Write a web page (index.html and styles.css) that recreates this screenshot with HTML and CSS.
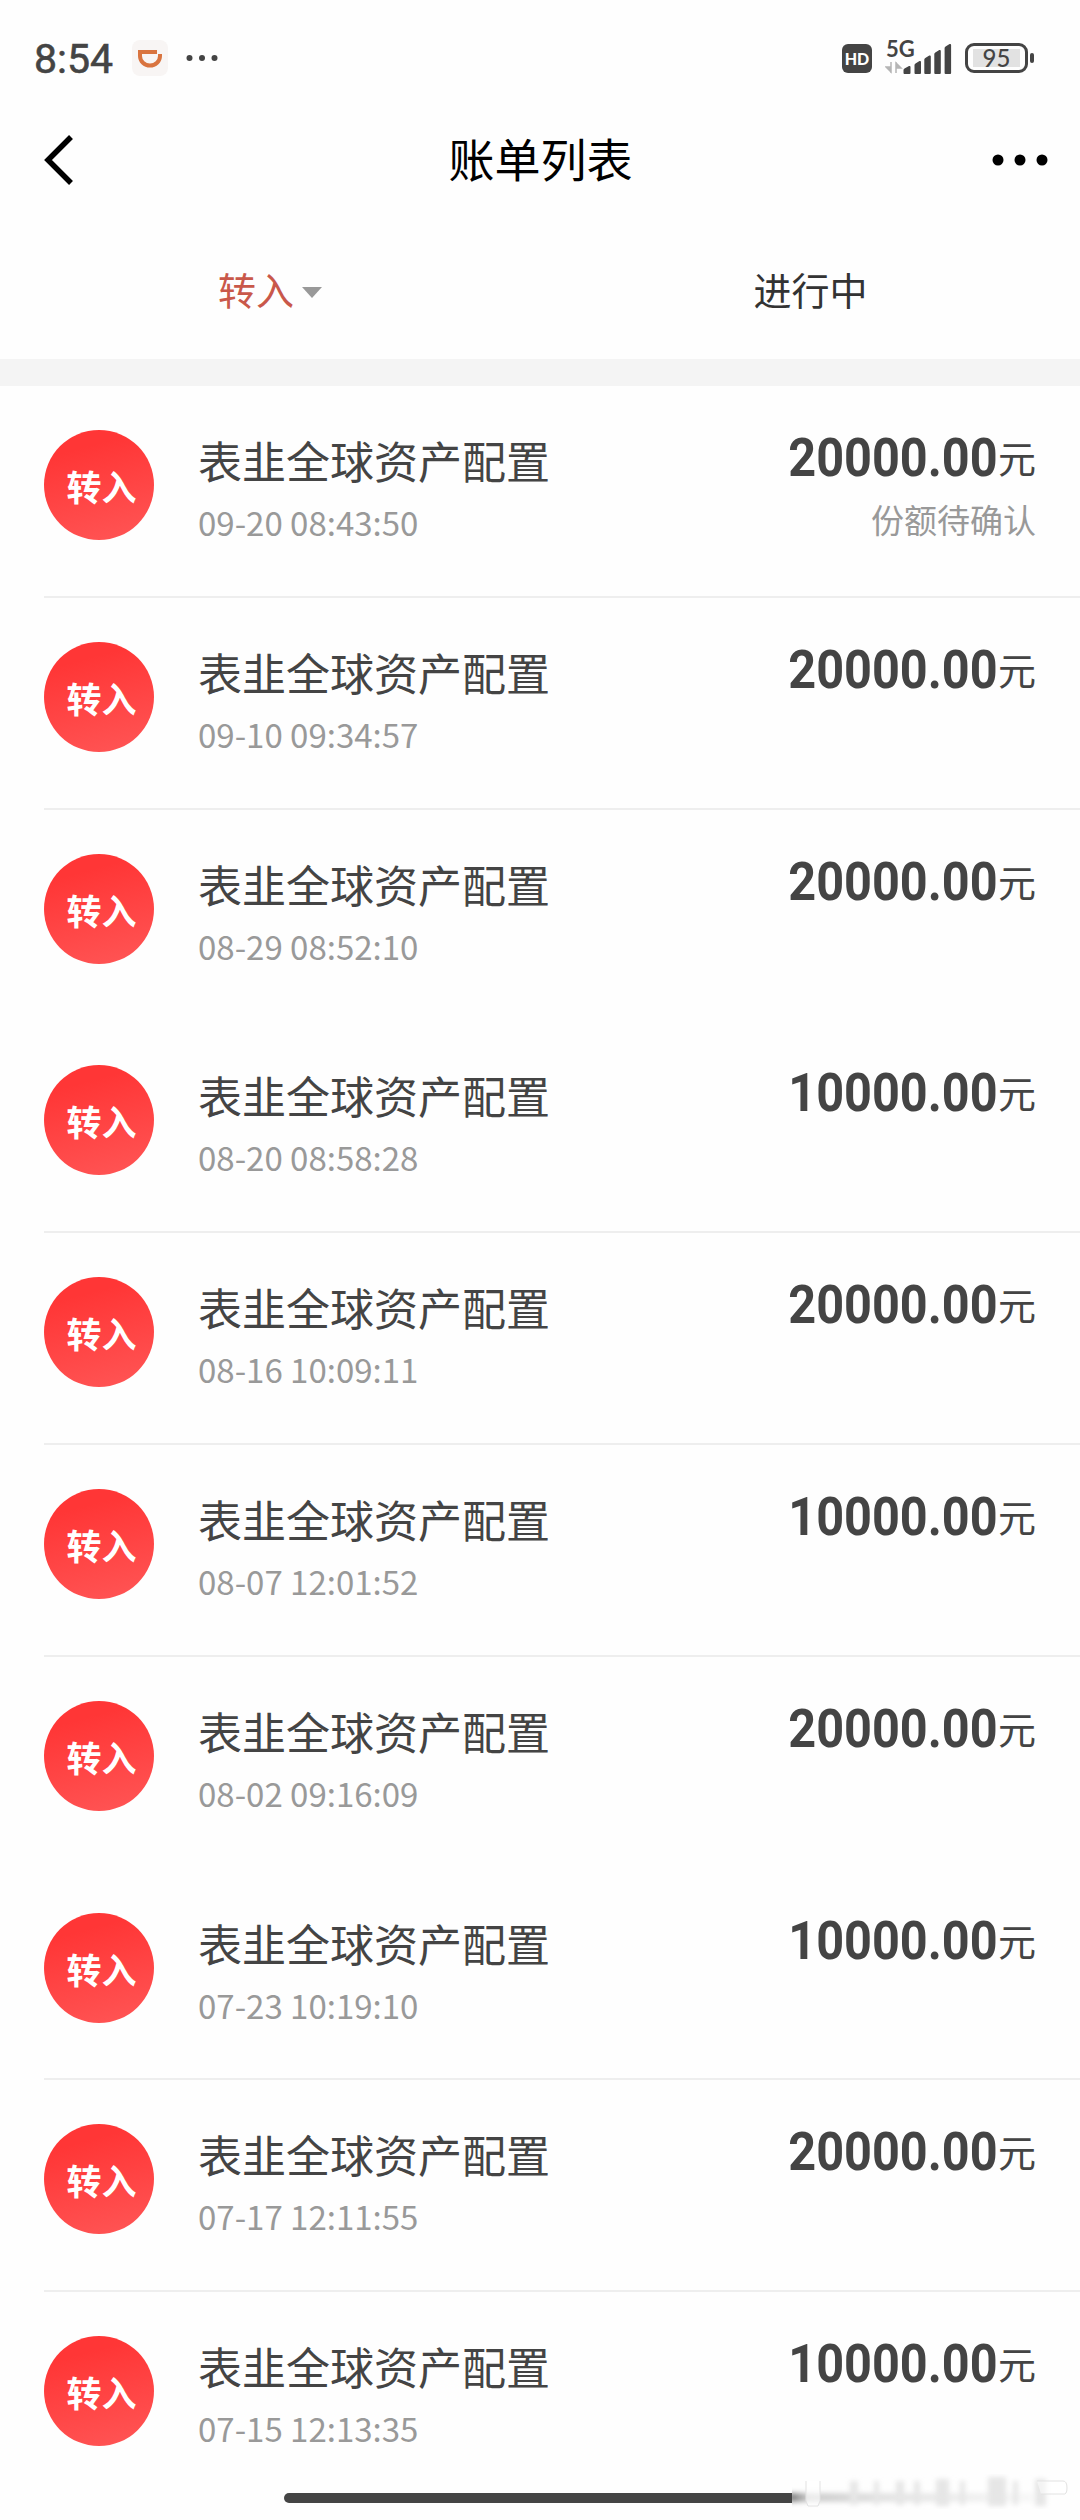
FILE: index.html
```
<!DOCTYPE html>
<html lang="zh-CN">
<head>
    <meta charset="UTF-8">
    <meta name="viewport" content="width=device-width, initial-scale=1.0">
    <title>账单列表</title>
    <link rel="stylesheet" href="styles.css">
</head>
<body>
    <div class="status">
        <span class="clock">8:54</span>
        <svg class="didi" width="36" height="36" viewBox="0 0 36 36">
            <rect width="36" height="36" rx="8" fill="#f8f5f4"/>
            <path d="M25 12H8v4a10 9.500 0 0 0 20 0v-2" fill="none" stroke="#d9743f" stroke-width="4"/>
        </svg>
        <svg class="more" width="32" height="8" viewBox="0 0 32 8" fill="#444">
            <circle cx="3.500" cy="4" r="3"/>
            <circle cx="16" cy="4" r="3"/>
            <circle cx="28.500" cy="4" r="3"/>
        </svg>
        <div class="right">
            <span class="hd">HD</span>
            <div class="signal">
                <span class="net">5G</span>
                <svg width="68" height="34" viewBox="0 0 68 34">
                    <path d="M6 22v11M6 32l-5-5h5zM11 33V22M11 23l5 5h-5z" fill="#b5b5b5" stroke="#b5b5b5" stroke-width="1.500"/>
                    <path d="M18.500 33v-3q0-1 1-1.600l4.500-2.400q1.500-.500 1.500 1v6q0 1-1 1h-5q-1 0-1-1zM29.500 33v-8q0-1 1-1.600l4-2.400q1.500-.500 1.500 1v11q0 1-1 1h-4.500q-1 0-1-1zM39.300 33V19.500q0-1 1-1.600l4-2.400q1.500-.500 1.500 1V33q0 1-1 1h-4.500q-1 0-1-1zM49.300 33V14q0-1 1-1.600l4-2.400q1.500-.500 1.500 1v22q0 1-1 1h-4.500q-1 0-1-1zM59.600 33V8q0-1 1-1.600l4-2.400q1.500-.500 1.500 1v28q0 1-1 1h-4.500q-1 0-1-1z" fill="#444"/>
                </svg>
            </div>
            <div class="battery"><span>95</span></div>
            <i class="nub"></i>
        </div>
    </div>
    <div class="nav">
        <svg class="back" width="34" height="52" viewBox="0 0 34 52">
            <path d="M30 3L7 26l23 23" fill="none" stroke="#000" stroke-width="5.500"/>
        </svg>
        <h1>账单列表</h1>
        <svg class="menu" width="56" height="12" viewBox="0 0 56 12">
            <circle cx="6" cy="6" r="5.500"/>
            <circle cx="28" cy="6" r="5.500"/>
            <circle cx="50" cy="6" r="5.500"/>
        </svg>
    </div>
    <div class="tabs">
        <div class="tab active">转入<i class="arrow"></i></div>
        <div class="tab">进行中</div>
    </div>
    <ul class="list"></ul>
    <div class="home">
        <svg class="smear" width="290" height="36" viewBox="0 0 290 36">
            <defs>
                <linearGradient id="tail">
                    <stop offset="0" stop-color="#777"/>
                    <stop offset=".08" stop-color="#ccc"/>
                    <stop offset=".4" stop-color="#e4e4e4"/>
                    <stop offset="1" stop-color="#f8f8f8"/>
                </linearGradient>
                <filter id="soft"><feGaussianBlur stdDeviation="2.500"/></filter>
            </defs>
            <g filter="url(#soft)">
                <rect x="-3" y="20" width="245" height="9" fill="url(#tail)"/>
                <g fill="#e6e6e6">
                    <rect x="58" y="8" width="8" height="24"/>
                    <rect x="82" y="8" width="5" height="24"/>
                    <rect x="104" y="8" width="8" height="24"/>
                    <rect x="122" y="8" width="6" height="24"/>
                    <rect x="144" y="6" width="13" height="27"/>
                    <rect x="168" y="8" width="5" height="24"/>
                    <rect x="196" y="4" width="18" height="29"/>
                    <rect x="221" y="8" width="5" height="24"/>
                    <rect x="243" y="6" width="11" height="27"/>
                </g>
            </g>
            <path d="M14 8v20l2 5h10l2-5V8" fill="#fff" fill-opacity=".6" stroke="#e2e2e2"/>
            <path d="M245 8h26q4 0 4 7t-4 6h-22" fill="#fff" fill-opacity=".5" stroke="#e2e2e2"/>
        </svg>
    </div>
    <script>
        var bills=[
            {time:'09-20 08:43:50',money:'20000.00',state:'份额待确认'},
            {time:'09-10 09:34:57',money:'20000.00'},
            {time:'08-29 08:52:10',money:'20000.00',noline:true},
            {time:'08-20 08:58:28',money:'10000.00'},
            {time:'08-16 10:09:11',money:'20000.00'},
            {time:'08-07 12:01:52',money:'10000.00'},
            {time:'08-02 09:16:09',money:'20000.00',noline:true},
            {time:'07-23 10:19:10',money:'10000.00'},
            {time:'07-17 12:11:55',money:'20000.00'},
            {time:'07-15 12:13:35',money:'10000.00',noline:true}
        ]
        var list=document.querySelector('.list')
        bills.forEach(function(bill){
            var node=document.createElement('li')
            if(bill.noline){
                node.classList.add('noline')
            }
            node.innerHTML='<div class="icon">转入</div>'
                +'<div class="info"><h3>表韭全球资产配置</h3><p>'+bill.time+'</p></div>'
                +'<div class="amount"><div class="money"><b>'+bill.money+'</b><span>元</span></div>'
                +(bill.state?'<p>'+bill.state+'</p>':'')+'</div>'
            list.appendChild(node)
        })
    </script>
</body>
</html>
```
FILE: styles.css
```
*{
    box-sizing: border-box;
}
body{
    margin: 0;
    width: 1080px;
    height: 2520px;
    overflow: hidden;
    position: relative;
    background: #fefefe;
    color: #444;
    font-family: "Noto Sans CJK SC", sans-serif;
}
h1,h3,p,ul{
    margin: 0;
    padding: 0;
    font-weight: 400;
}
.status{
    height: 116px;
    padding: 0 46px 0 34px;
    display: flex;
    align-items: center;
}
.clock{
    width: 98px;
    padding-top: 3px;
    font: 400 41px/1 Roboto, sans-serif;
    -webkit-text-stroke: .6px #444;
}
.more{
    margin-left: 18px;
}
.right{
    margin-left: auto;
    display: flex;
    align-items: center;
}
.hd{
    width: 30px;
    height: 29px;
    border-radius: 6px;
    background: #444;
    color: #fff;
    font: 900 16px/29px Lato, sans-serif;
    text-align: center;
}
.signal{
    width: 68px;
    height: 34px;
    margin: 0 12px 0 13px;
    position: relative;
}
.signal svg{
    display: block;
    margin-top: -1px;
}
.net{
    position: absolute;
    left: 1px;
    top: -3px;
    font: 700 22px/22px Lato, sans-serif;
}
.battery{
    width: 63px;
    height: 30px;
    padding: 3px 5px;
    border: 3px solid #444;
    border-radius: 9px;
}
.battery span{
    display: block;
    height: 18px;
    background: #e2e2e2;
    font: 500 24px/18px Lato, sans-serif;
    text-align: center;
}
.nub{
    width: 4px;
    height: 10px;
    margin-left: 2px;
    border-radius: 2px;
    background: #444;
}
.nav{
    height: 88px;
    padding: 0 32px 0 41px;
    display: flex;
    align-items: center;
    justify-content: space-between;
}
.back{
    margin-right: 14px;
}
.nav h1{
    height: 88px;
    color: #000;
    font-size: 46px;
    line-height: 82px;
}
.tabs{
    height: 182px;
    padding-top: 57px;
    border-bottom: 27px solid #f4f4f4;
    display: flex;
}
.tab{
    width: 540px;
    height: 54px;
    display: flex;
    align-items: center;
    justify-content: center;
    color: #333;
    font-size: 38px;
}
.tab:last-child{
    padding-left: 1px;
}
.tab.active{
    color: #c9584a;
}
.arrow{
    margin: 8px 0 0 8px;
    border: 10px solid transparent;
    border-top: 11px solid #999;
    border-bottom: 0;
}
.list{
    list-style: none;
}
.list li{
    height: 211.8px;
    margin-left: 44px;
    padding: 44px 44px 0 0;
    border-bottom: 2px solid #eee;
    display: flex;
}
.list li.noline{
    border-color: transparent;
}
.icon{
    width: 110px;
    height: 110px;
    padding-left: 5px;
    border-radius: 50%;
    background: linear-gradient(165deg, #ff3636 20%, #ff5656);
    color: #fff;
    font-size: 35px;
    font-weight: 700;
    line-height: 112px;
    text-align: center;
}
.info{
    flex: 1;
    margin-top: -3px;
    margin-left: 44px;
}
.info h3{
    font-size: 44px;
    line-height: 66px;
}
.info p,.amount p{
    color: #999;
    font-size: 33px;
    line-height: 48px;
}
.info p{
    margin-top: 5px;
}
.amount{
    margin-top: -2px;
    text-align: right;
}
.amount p{
    margin-top: 7px;
}
.money{
    height: 60px;
    display: flex;
    align-items: baseline;
    justify-content: flex-end;
}
.money b{
    font: 700 54px/60px Roboto, sans-serif;
    transform: scaleX(.9);
    transform-origin: right;
}
.money span{
    font-size: 38px;
    line-height: 60px;
    transform: translateY(-3px);
}
.home{
    width: 508px;
    height: 10px;
    border-radius: 5px 0 0 5px;
    background: #444;
    position: absolute;
    left: 284px;
    top: 2493px;
}
.smear{
    position: absolute;
    left: 508px;
    top: -20px;
}
```
